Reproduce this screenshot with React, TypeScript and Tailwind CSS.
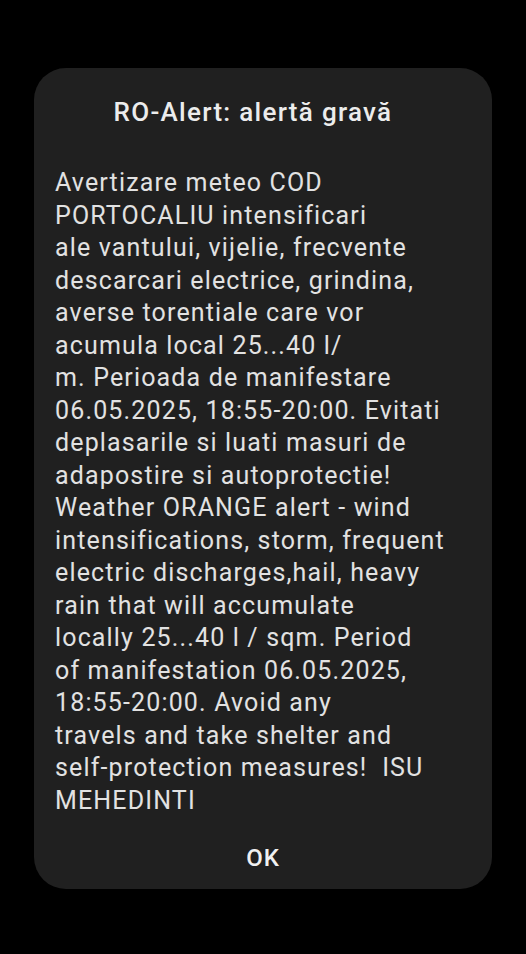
import React from "react";

const LINES = [
  "Avertizare meteo COD",
  "PORTOCALIU intensificari",
  "ale vantului, vijelie, frecvente",
  "descarcari electrice, grindina,",
  "averse torentiale care vor",
  "acumula local 25...40 l/",
  "m. Perioada de manifestare",
  "06.05.2025, 18:55-20:00. Evitati",
  "deplasarile si luati masuri de",
  "adapostire si autoprotectie!",
  "Weather ORANGE alert - wind",
  "intensifications, storm, frequent",
  "electric discharges,hail, heavy",
  "rain that will accumulate",
  "locally 25...40 l / sqm. Period",
  "of manifestation 06.05.2025,",
  "18:55-20:00. Avoid any",
  "travels and take shelter and",
  "self-protection measures!\u00a0 ISU",
  "MEHEDINTI",
];

export default function App() {
  return (
    <div className="w-full h-[954px] bg-black font-['Roboto',sans-serif] flex flex-col">
      <div className="mx-[34px] mt-[68px] h-[821px] rounded-[32px] bg-[#202020] flex flex-col pt-[28px] pb-[15px]">
        {/* Title */}
        <h1 className="pr-[20px] text-center text-[26px] leading-[32px] font-medium tracking-[1.3px] text-[#ececec]">
          RO-Alert: alertă gravă
        </h1>

        {/* Message */}
        <div className="mt-[39px] px-[21px] text-[25px] leading-[32.5px] tracking-[1.15px] text-[#e2e2e2] whitespace-nowrap">
          {LINES.map((line, i) => (
            <div key={i}>{line}</div>
          ))}
        </div>

        {/* Action */}
        <div className="mt-auto flex justify-center">
          <button className="text-[24px] leading-[32px] font-medium tracking-[1px] text-[#f0f0f0]">
            OK
          </button>
        </div>
      </div>
    </div>
  );
}
